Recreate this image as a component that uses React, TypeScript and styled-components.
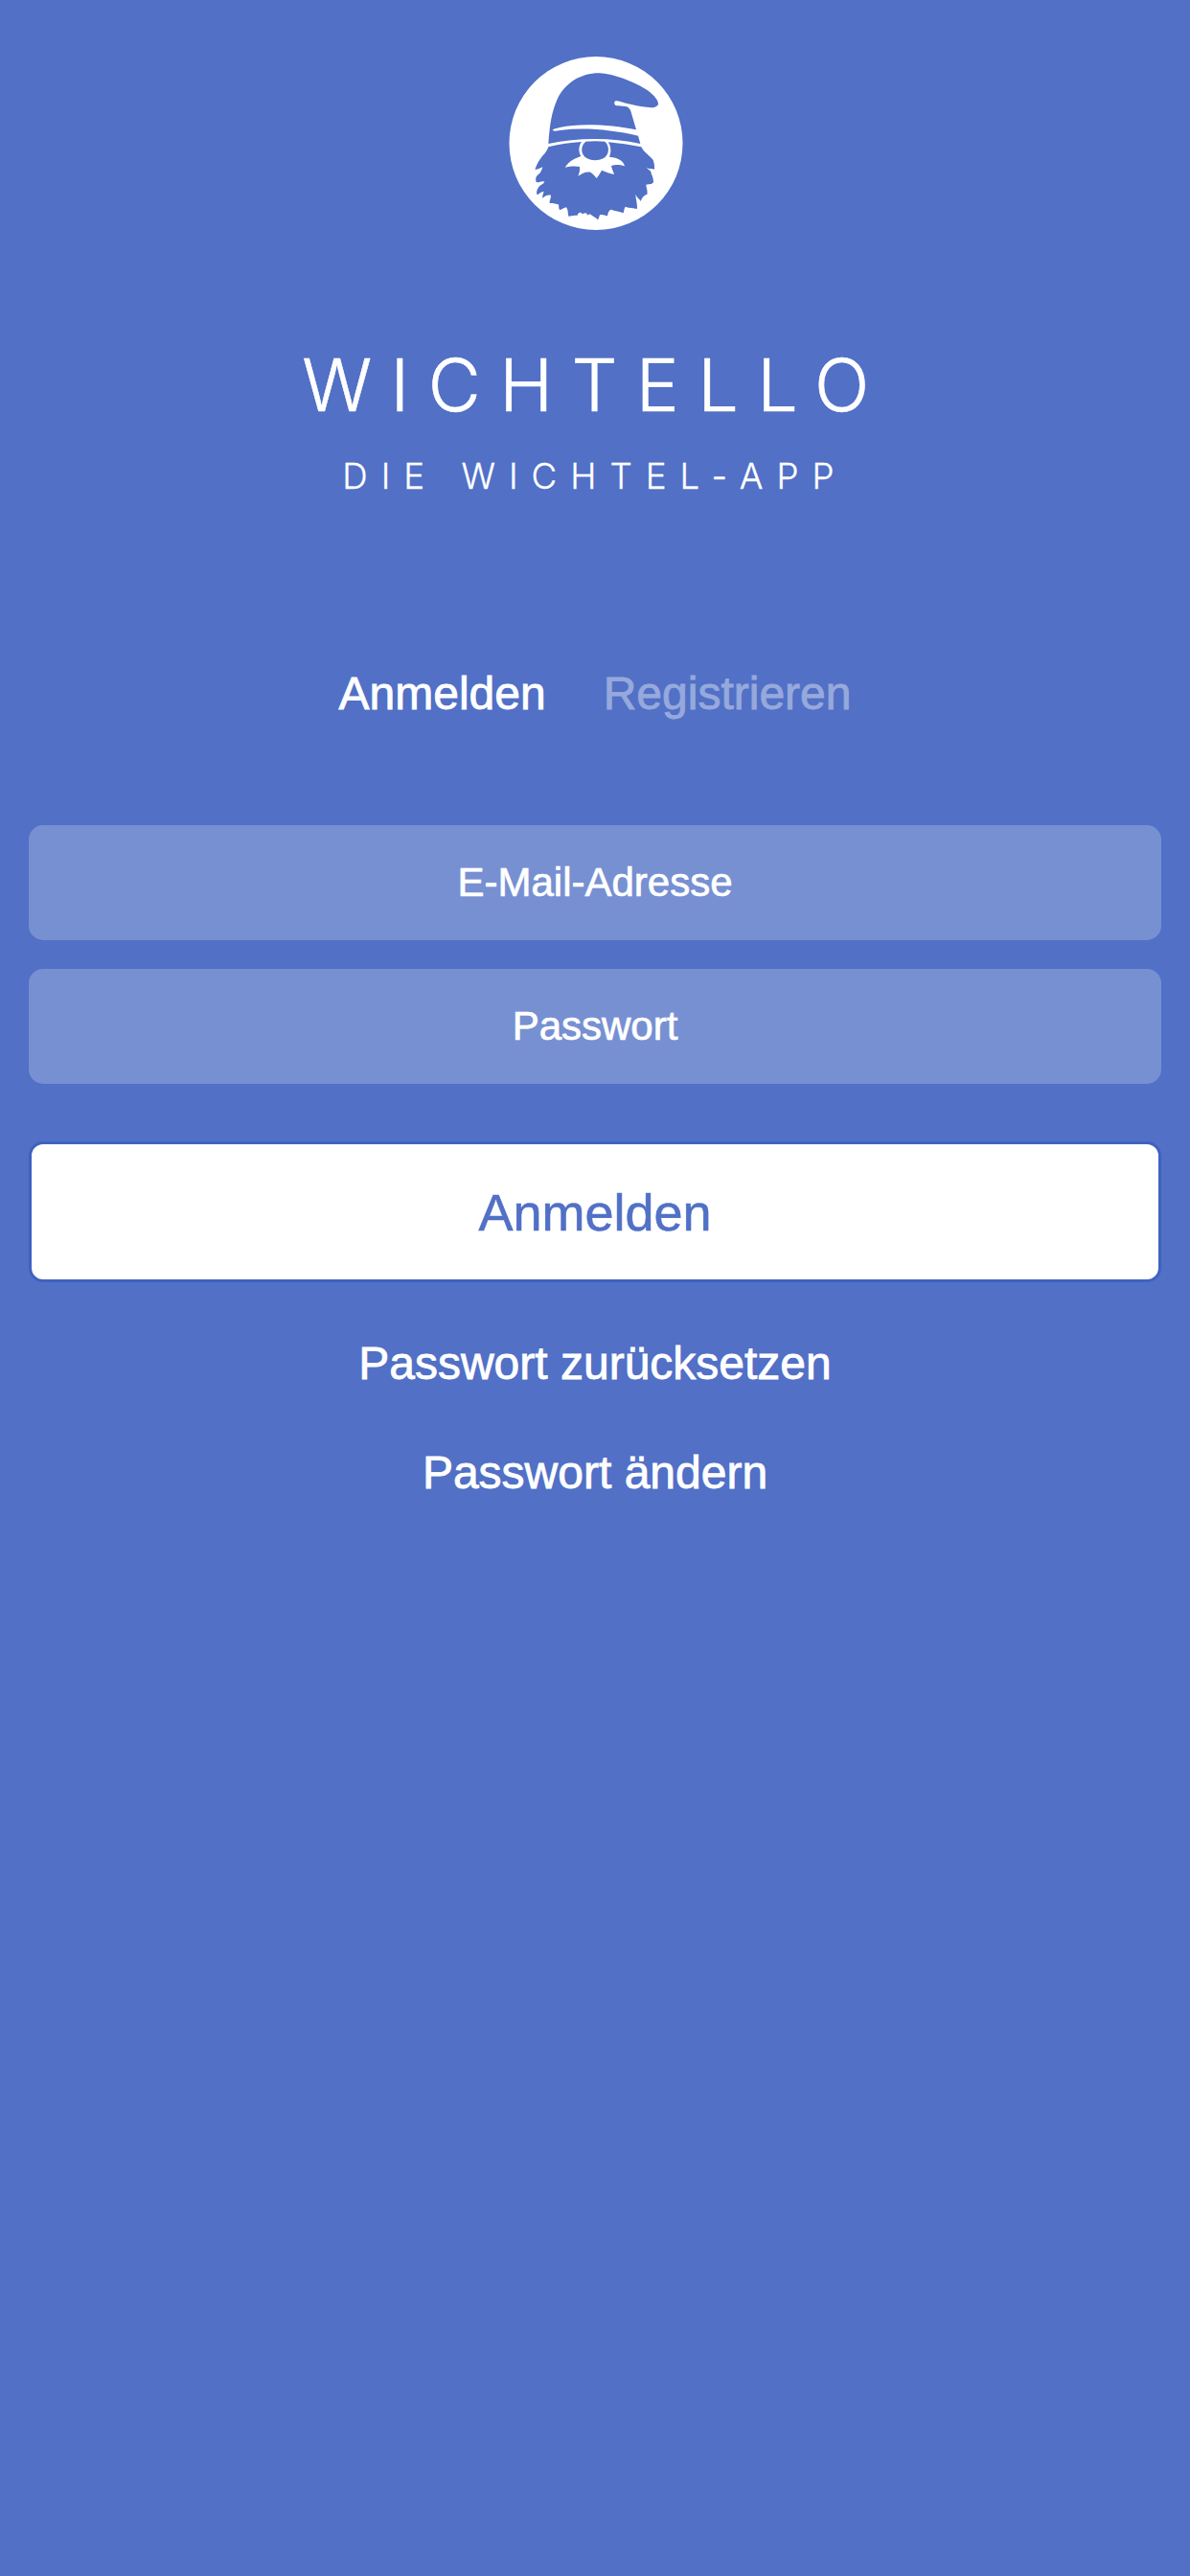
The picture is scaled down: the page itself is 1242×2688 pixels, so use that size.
import React, { useState } from 'react';
import styled, { createGlobalStyle } from 'styled-components';

const colors = {
  primary: '#5170c6',
  primaryDark: '#3f61c1',
  white: '#ffffff',
};

const GlobalStyle = createGlobalStyle`
  * {
    box-sizing: border-box;
  }

  body {
    margin: 0;
    background: ${colors.primary};
    font-family: 'Liberation Sans', Arial, sans-serif;
  }
`;

const Page = styled.main`
  display: flex;
  flex-direction: column;
  align-items: center;
  min-height: 2688px;
  padding: 50px 30px 0;
  background: ${colors.primary};
  color: ${colors.white};
`;

const Logo = styled.svg`
  width: 200px;
  height: 200px;
  flex: none;
`;

const Title = styled.h1`
  margin: 107px 0 0;
  font-family: Inter, sans-serif;
  font-size: 75.5px;
  font-weight: 300;
  line-height: 90px;
  letter-spacing: 19.4px;
  white-space: nowrap;
  -webkit-text-stroke: 0.6px currentColor;
`;

const Subtitle = styled.h2`
  margin: 25px 0 0;
  font-family: Inter, sans-serif;
  font-size: 36.7px;
  font-weight: 300;
  line-height: 50px;
  letter-spacing: 14px;
  white-space: nowrap;
  -webkit-text-stroke: 0.3px currentColor;
`;

const Tabs = styled.nav`
  display: flex;
  gap: 60px;
  margin-top: 172px;
`;

const Tab = styled.button<{ $active: boolean }>`
  padding: 0;
  border: 0;
  background: none;
  color: ${colors.white};
  opacity: ${({ $active }) => ($active ? 1 : 0.4)};
  font-family: inherit;
  font-size: 48px;
  line-height: 60px;
  -webkit-text-stroke: 0.8px currentColor;
`;

const Form = styled.form`
  display: flex;
  flex-direction: column;
  gap: 30px;
  width: 100%;
  margin-top: 107px;
`;

const Input = styled.input`
  width: 100%;
  height: 120px;
  padding: 0 30px;
  border: 0;
  border-radius: 15px;
  background: #7790d2;
  color: ${colors.white};
  font-family: inherit;
  font-size: 42px;
  text-align: center;
  -webkit-text-stroke: 0.7px currentColor;

  &::placeholder {
    color: ${colors.white};
    opacity: 1;
  }
`;

const SubmitButton = styled.button`
  height: 147px;
  margin-top: 30px;
  padding: 0;
  border: 3px solid ${colors.primaryDark};
  border-radius: 15px;
  background: ${colors.white};
  color: ${colors.primary};
  font-family: inherit;
  font-size: 54px;
  -webkit-text-stroke: 0.6px currentColor;
`;

const Links = styled.div`
  display: flex;
  flex-direction: column;
  align-items: center;
  gap: 54px;
  margin-top: 55px;
`;

const TextLink = styled.a`
  color: ${colors.white};
  font-size: 48px;
  line-height: 60px;
  text-decoration: none;
  -webkit-text-stroke: 0.8px currentColor;
`;

const GnomeLogo: React.FC = () => (
  <Logo viewBox="0 0 600 600" aria-hidden="true">
    <circle cx="303" cy="298.500" r="271.500" fill={colors.white} />
    <g fill={colors.primary}>
      {/* hat with its brim */}
      <path d="M154 300C158 240 165 200 180 165C205 108 258 78 315 79C350 80 420 104 460 130C488 149 499 167 498 176C495 184 485 187 475 187C440 184 400 175 370 166C362 164 360 168 361 175C362 180 366 181 372 181L395 183C406 185 411 191 414 205L429 256C350 240 250 235 190 249C178 252 169 254 167 258C170 261 180 260 190 258C270 248 350 256 435 275L442 300C350 280 250 280 154 300Z" />
      {/* nose */}
      <path d="M271 293Q300 290 331 293C347 308 345 335 326 346C310 354 290 354 275 346C255 335 253 308 271 293Z" />
      {/* beard */}
      <path d="M154 310C190 301 225 296 258 294C248 308 248 325 256 339C236 346 218 355 206 374C222 370 240 369 252 372C254 383 250 393 247 401C262 392 272 387 286 389C294 395 300 401 305 408C311 400 317 391 321 383C334 389 347 392 360 396C357 386 352 377 351 369C363 364 378 365 393 370C388 352 373 344 345 341C352 325 350 307 341 295C375 298 410 303 445 310C452 325 466 333 482 351C485 360 487 370 486 381C480 377 473 381 461 375C470 383 477 386 476 393C481 403 483 412 483 420C477 429 471 425 460 428C460 436 466 447 463 459C454 460 447 469 443 480C439 472 433 471 427 459C428 475 433 490 432 504C420 500 408 502 395 497C391 503 391 509 389 517C377 511 362 511 351 506C342 508 341 518 339 526C330 524 323 520 315 523C313 528 312 534 309 538C304 532 298 529 290 524C286 519 281 519 276 524C274 515 271 516 269 518C266 514 264 521 260 520C256 513 248 514 245 524C236 524 228 524 218 528C214 518 217 508 210 499C203 499 198 507 189 507C184 498 190 490 183 490C175 487 167 485 158 486C156 479 163 470 162 461C153 458 140 465 136 470C134 464 138 456 140 449C131 450 125 457 119 460C114 451 121 438 127 432C132 427 138 427 142 419C134 414 124 423 116 420C112 405 117 401 123 396C130 391 134 381 136 373C128 375 121 382 112 380C117 367 121 357 129 347C139 334 148 327 154 310Z" />
    </g>
  </Logo>
);

const App: React.FC = () => {
  const [mode, setMode] = useState<'login' | 'register'>('login');

  return (
    <>
      <GlobalStyle />
      <Page>
        <GnomeLogo />
        <Title>WICHTELLO</Title>
        <Subtitle>DIE WICHTEL-APP</Subtitle>
        <Tabs>
          <Tab $active={mode === 'login'} onClick={() => setMode('login')}>
            Anmelden
          </Tab>
          <Tab $active={mode === 'register'} onClick={() => setMode('register')}>
            Registrieren
          </Tab>
        </Tabs>
        <Form onSubmit={(e) => e.preventDefault()}>
          <Input type="email" placeholder="E-Mail-Adresse" />
          <Input type="password" placeholder="Passwort" />
          <SubmitButton type="submit">
            {mode === 'login' ? 'Anmelden' : 'Registrieren'}
          </SubmitButton>
        </Form>
        <Links>
          <TextLink>Passwort zurücksetzen</TextLink>
          <TextLink>Passwort ändern</TextLink>
        </Links>
      </Page>
    </>
  );
};

export default App;
